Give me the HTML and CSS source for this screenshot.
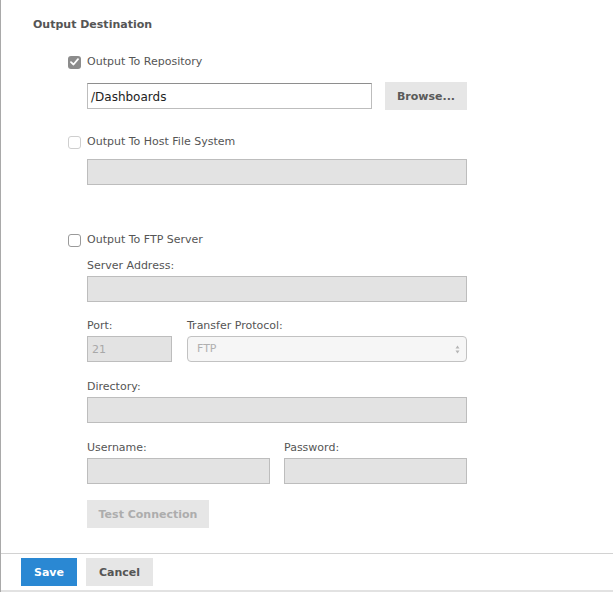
FILE: index.html
```html
<!DOCTYPE html>
<html>
<head>
<meta charset="utf-8">
<link rel="stylesheet" href="styles.css">
</head>
<body>
<div class="page">
  <div class="content">
    <div class="heading">Output Destination</div>
    <div class="group">
      <label class="check-row"><span class="cb cb-checked"><svg width="9" height="8" viewBox="0 0 9 8"><path d="M1 4.2 L3.5 6.5 L8 1.2" fill="none" stroke="#fff" stroke-width="1.8" stroke-linecap="round" stroke-linejoin="round"/></svg></span><span class="cb-label">Output To Repository</span></label>
      <div class="fields">
        <div class="repo-row">
          <div class="input input-active">/Dashboards</div>
          <div class="btn btn-browse">Browse...</div>
        </div>
      </div>

      <label class="check-row row-host"><span class="cb cb-light"></span><span class="cb-label">Output To Host File System</span></label>
      <div class="fields">
        <div class="input input-disabled host-input"></div>
      </div>

      <label class="check-row row-ftp"><span class="cb cb-empty"></span><span class="cb-label">Output To FTP Server</span></label>
      <div class="fields">
        <div class="field-label">Server Address:</div>
        <div class="input input-disabled"></div>

        <div class="grid-port">
          <div class="field-label">Port:</div>
          <div class="field-label">Transfer Protocol:</div>
          <div class="input input-disabled port-input">21</div>
          <div class="select">FTP<span class="arrows"><svg width="5" height="9" viewBox="0 0 5 9"><path d="M2.5 0.5 L4.5 3.5 L0.5 3.5 Z M2.5 8.5 L4.5 5.5 L0.5 5.5 Z" fill="#b5b5b5"/></svg></span></div>
        </div>

        <div class="field-label spaced">Directory:</div>
        <div class="input input-disabled"></div>

        <div class="grid-user">
          <div class="field-label">Username:</div>
          <div class="field-label">Password:</div>
          <div class="input input-disabled"></div>
          <div class="input input-disabled"></div>
        </div>

        <div class="btn btn-test">Test Connection</div>
      </div>
    </div>
  </div>
  <div class="footer">
    <div class="btn btn-save">Save</div>
    <div class="btn btn-cancel">Cancel</div>
  </div>
</div>
</body>
</html>
```

FILE: styles.css
```css
html, body {
  margin: 0;
  padding: 0;
  background: #fff;
}
body {
  font-family: "DejaVu Sans", Verdana, sans-serif;
  font-size: 11px;
  color: #555;
}
.page {
  width: 613px;
  height: 592px;
  border-left: 1px solid #a9a9a9;
  box-sizing: border-box;
  display: flex;
  flex-direction: column;
}
.content {
  height: 554px;
  box-sizing: border-box;
  border-bottom: 1px solid #d2d2d2;
  padding-top: 18px;
}
.heading {
  margin-left: 32px;
  font-weight: bold;
  line-height: 14px;
  color: #555;
}
.group {
  margin-left: 67px;
  margin-top: 23px;
}
.check-row {
  display: flex;
  align-items: center;
  height: 14px;
  line-height: 14px;
}
.cb {
  width: 13px;
  height: 13px;
  box-sizing: border-box;
  border-radius: 3px;
  margin-right: 6px;
  display: flex;
  align-items: center;
  justify-content: center;
}
.cb-checked {
  background: #8c8c8c;
}
.cb-light {
  border: 1px solid #cfcfcf;
  background: #fff;
}
.cb-empty {
  border: 1px solid #9a9a9a;
  background: #fff;
}
.cb-label {
  color: #555;
}
.fields {
  margin-left: 19px;
  width: 380px;
}
.repo-row {
  margin-top: 13px;
  display: flex;
  align-items: center;
  gap: 13px;
  height: 28px;
}
.input {
  box-sizing: border-box;
  height: 26px;
  line-height: 24px;
  padding: 1px 3px 0;
  border: 1px solid #bdbdbd;
}
.input-active {
  width: 285px;
  background: #fff;
  border-top-color: #8e8e8e;
  color: #222;
  font-size: 12px;
}
.input-disabled {
  background: #e3e3e3;
  color: #a8a8a8;
}
.btn {
  box-sizing: border-box;
  height: 28px;
  padding-top: 2px;
  line-height: 26px;
  text-align: center;
  font-weight: bold;
  background: #e6e6e6;
  color: #5a5a5a;
}
.btn-browse {
  width: 82px;
}
.row-host {
  margin-top: 25px;
}
.host-input {
  margin-top: 10px;
}
.row-ftp {
  margin-top: 48px;
}
.field-label {
  line-height: 14px;
  margin-top: 12px;
  margin-bottom: 3px;
  color: #555;
}
.grid-port {
  display: grid;
  grid-template-columns: 85px 280px;
  column-gap: 15px;
  margin-top: 5px;
}
.grid-user {
  display: grid;
  grid-template-columns: 183px 183px;
  column-gap: 14px;
  margin-top: 6px;
}
.port-input {
  padding-left: 4px;
}
.select {
  box-sizing: border-box;
  height: 26px;
  line-height: 24px;
  border: 1px solid #c2c2c2;
  border-radius: 4px;
  background: #f6f6f6;
  color: #b0b0b0;
  padding: 0 9px;
  display: flex;
  justify-content: space-between;
  align-items: center;
}
.arrows {
  display: flex;
  align-items: center;
  margin-right: -3px;
}
.spaced {
  margin-top: 18px;
}
.btn-test {
  margin-top: 16px;
  width: 122px;
  color: #adadad;
}
.footer {
  height: 38px;
  box-sizing: border-box;
  padding-top: 4px;
  padding-left: 20px;
  display: flex;
  gap: 9px;
  border-bottom: 2px solid #e2e2e2;
}
.btn-save {
  width: 56px;
  background: #2a88d3;
  color: #fff;
}
.btn-cancel {
  width: 67px;
  color: #555;
}
```
